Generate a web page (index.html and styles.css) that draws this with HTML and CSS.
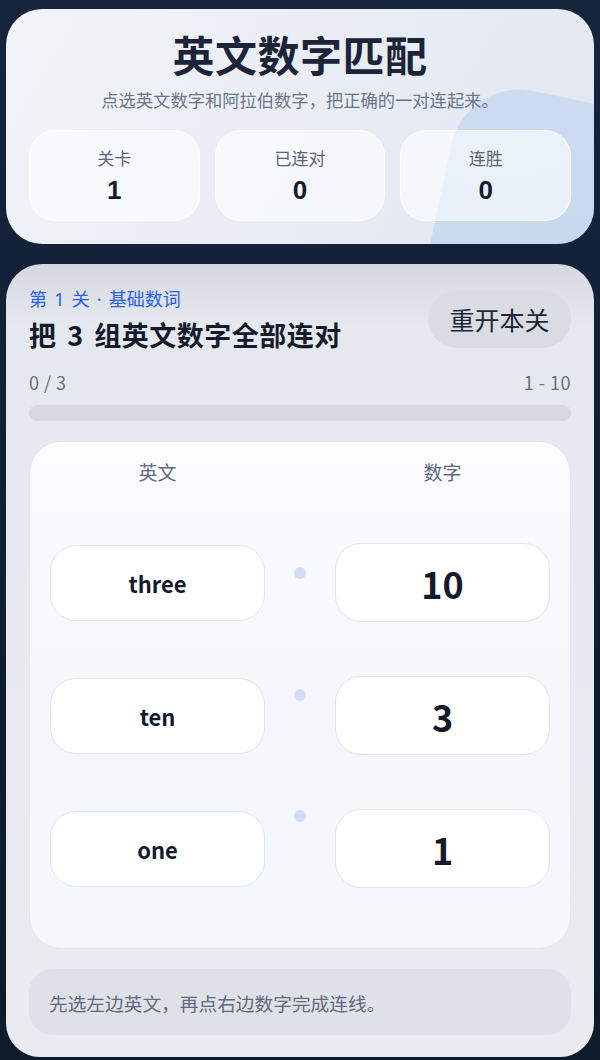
FILE: index.html
```html
<!DOCTYPE html>
<html lang="zh">
<head>
  <meta charset="utf-8">
  <title>英文数字匹配</title>
  <link rel="stylesheet" href="styles.css">
</head>
<body>
  <div class="hero">
    <div class="hero-blob"></div>
    <h1>英文数字匹配</h1>
    <p class="subtitle">点选英文数字和阿拉伯数字，把正确的一对连起来。</p>
    <div class="stats">
      <div class="stat">
        <div class="stat-label">关卡</div>
        <div class="stat-value">1</div>
      </div>
      <div class="stat">
        <div class="stat-label">已连对</div>
        <div class="stat-value">0</div>
      </div>
      <div class="stat">
        <div class="stat-label">连胜</div>
        <div class="stat-value">0</div>
      </div>
    </div>
  </div>

  <div class="game">
    <div class="game-header">
      <div>
        <div class="level-tag">第 1 关 · 基础数词</div>
        <h2>把 3 组英文数字全部连对</h2>
      </div>
      <button class="restart">重开本关</button>
    </div>

    <div class="progress-info">
      <span>0 / 3</span>
      <span>1 - 10</span>
    </div>
    <div class="progress-bar"><div class="progress-fill" style="width: 0%"></div></div>

    <div class="board">
      <div class="board-head">
        <div>英文</div>
        <div></div>
        <div>数字</div>
      </div>
      <div class="pair-row">
        <button class="word-card">three</button>
        <span class="dot"></span>
        <button class="num-card">10</button>
      </div>
      <div class="pair-row">
        <button class="word-card">ten</button>
        <span class="dot"></span>
        <button class="num-card">3</button>
      </div>
      <div class="pair-row">
        <button class="word-card">one</button>
        <span class="dot"></span>
        <button class="num-card">1</button>
      </div>
    </div>

    <div class="hint">先选左边英文，再点右边数字完成连线。</div>
  </div>
</body>
</html>
```

FILE: styles.css
```css
:root {
  --text-color: #1a2133;
  --muted: #5f6b80;
  --accent: #2563eb;
  --border-color: #e1e5ee;
}

* {
  box-sizing: border-box;
}

body {
  margin: 0;
  padding: 9px 6px 0;
  font-family: "Noto Sans CJK SC", "Noto Sans", sans-serif;
  background: linear-gradient(180deg, #16253c 0%, #0e1a2c 100%);
  color: var(--text-color);
  min-height: 1060px;
}

.hero {
  position: relative;
  overflow: hidden;
  border-radius: 36px;
  padding: 19px 23px 23px;
  background: linear-gradient(120deg, #f2f4f8 0%, #e8ecf3 55%, #e0e6f0 100%);
  text-align: center;
}

.hero-blob {
  position: absolute;
  left: 432px;
  top: 92px;
  width: 260px;
  height: 240px;
  border-radius: 70px 40px 0 0;
  background: linear-gradient(180deg, rgba(178, 203, 240, 0.45), rgba(170, 208, 228, 0.55));
  transform: rotate(12deg);
}

.hero h1 {
  position: relative;
  margin: 0;
  font-size: 42px;
  line-height: 52px;
  font-weight: 700;
  letter-spacing: 0.5px;
  color: #1c2438;
}

.subtitle {
  position: relative;
  margin: 8px 0 0;
  font-size: 17.3px;
  line-height: 24px;
  color: #6a768b;
}

.stats {
  position: relative;
  display: grid;
  grid-template-columns: 1fr 1fr 1fr;
  gap: 15px;
  margin-top: 18px;
}

.stat {
  height: 91px;
  border-radius: 26px;
  background: rgba(255, 255, 255, 0.6);
  border: 1px solid rgba(255, 255, 255, 0.7);
  padding-top: 15px;
}

.stat-label {
  font-size: 17px;
  line-height: 24px;
  color: #5b667a;
}

.stat-value {
  margin-top: 4px;
  font-family: "Liberation Sans", Arial, sans-serif;
  font-size: 26px;
  line-height: 32px;
  font-weight: 700;
  color: #151c2d;
}

.game {
  margin-top: 20px;
  border-radius: 36px 36px 34px 34px;
  padding: 23px 23px 22px;
  background: linear-gradient(180deg, #d4d7dd 0%, #e5e8ee 60px, #e9ebf1 100%);
}

.game-header {
  display: flex;
  justify-content: space-between;
  align-items: flex-start;
}

.level-tag {
  font-family: "Noto Sans", "Noto Sans CJK SC", sans-serif;
  font-size: 18px;
  line-height: 24px;
  word-spacing: 2.5px;
  color: var(--accent);
}

.game-header h2 {
  margin: 6px 0 0;
  font-size: 27px;
  line-height: 36px;
  font-weight: 700;
  letter-spacing: 0.5px;
  word-spacing: 4px;
  color: #141b2b;
}

.restart {
  margin-top: 3px;
  width: 143px;
  height: 58px;
  border: none;
  border-radius: 29px;
  background: #d9dce2;
  font-family: inherit;
  font-size: 25px;
  color: #1f2636;
  cursor: pointer;
}

.progress-info {
  display: flex;
  justify-content: space-between;
  margin-top: 17px;
  font-size: 18px;
  line-height: 24px;
  letter-spacing: 0.5px;
  color: #64708a;
}

.progress-bar {
  margin-top: 11px;
  height: 16px;
  border-radius: 8px;
  background: #d6d9e1;
  overflow: hidden;
}

.progress-fill {
  height: 100%;
  background: var(--accent);
}

.board {
  margin-top: 20px;
  padding: 17px 20px 60px;
  border-radius: 32px;
  border: 1px solid var(--border-color);
  background: linear-gradient(180deg, #fbfcfe 0%, #f4f6fa 55%, #f4f7fb 100%);
}

.board-head {
  display: grid;
  grid-template-columns: 215px 1fr 215px;
  font-size: 19px;
  line-height: 26px;
  color: #5f6a80;
  text-align: center;
}

.pair-row {
  display: grid;
  grid-template-columns: 215px 1fr 215px;
  align-items: center;
  height: 79px;
  margin-top: 54px;
}

.board-head + .pair-row {
  margin-top: 58px;
}

.word-card,
.num-card {
  border: 1px solid #e2e5ec;
  background: #ffffff;
  border-radius: 26px;
  font-family: inherit;
  color: #131a2a;
  cursor: pointer;
}

.word-card {
  height: 76px;
  font-size: 22px;
  font-weight: 700;
}

.num-card {
  height: 79px;
  font-size: 36px;
  font-weight: 700;
}

.dot {
  justify-self: center;
  align-self: start;
  width: 12px;
  height: 12px;
  border-radius: 50%;
  background: #d4ddf7;
}

.pair-row:nth-child(2) .dot {
  margin-top: 24px;
}

.pair-row:nth-child(3) .dot {
  margin-top: 13px;
}

.pair-row:nth-child(4) .dot {
  margin-top: 1px;
}

.hint {
  margin-top: 20px;
  height: 66px;
  border-radius: 24px;
  background: #dfe1e8;
  padding: 0 20px;
  display: flex;
  align-items: center;
  font-size: 18.7px;
  color: #5f6a80;
}
```
